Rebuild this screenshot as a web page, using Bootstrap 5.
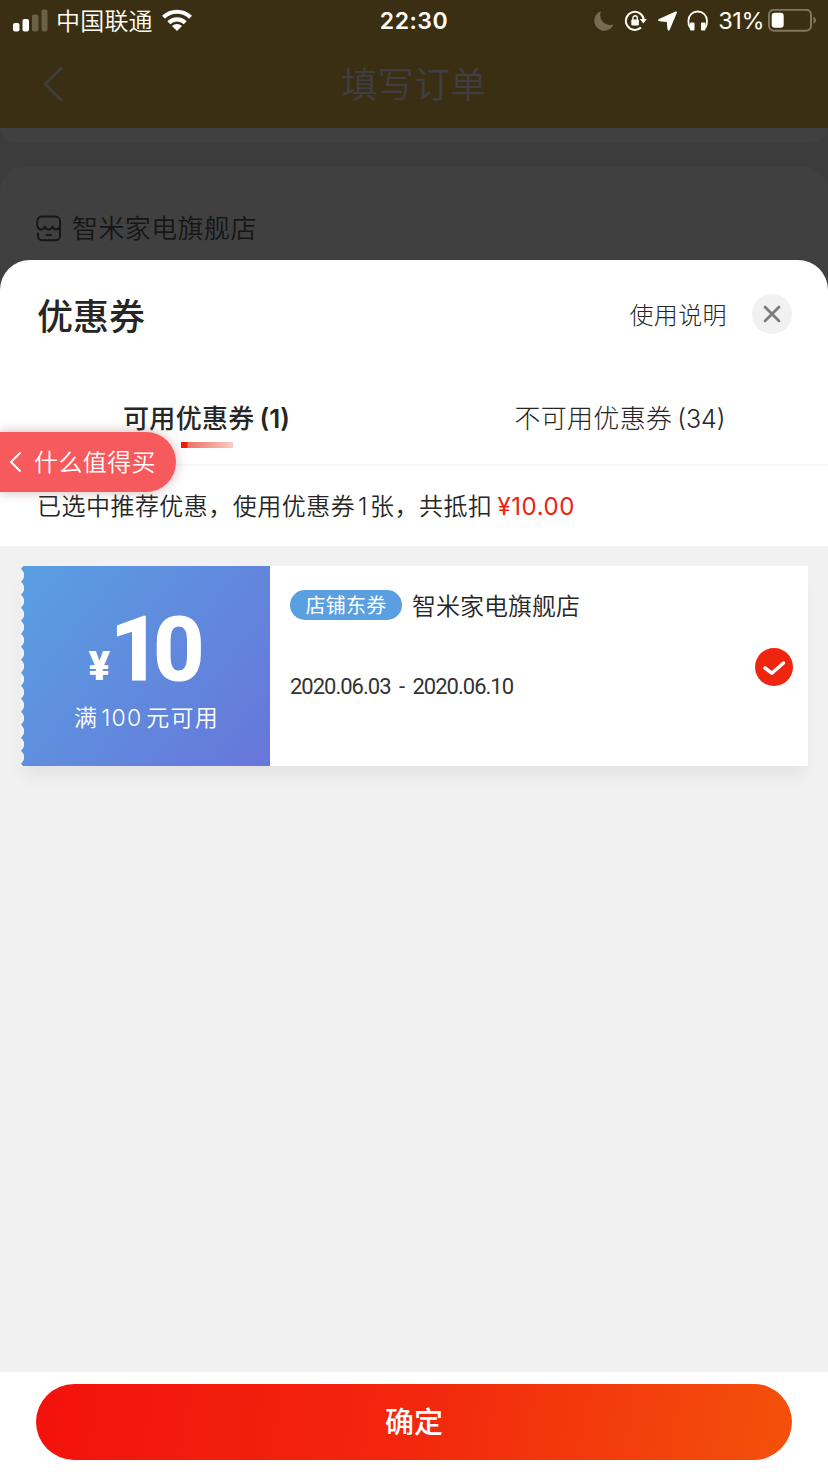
<!DOCTYPE html>
<html lang="zh-CN">
<head>
<meta charset="utf-8">
<meta name="viewport" content="width=device-width, initial-scale=1">
<title>优惠券</title>
<link href="https://cdn.jsdelivr.net/npm/bootstrap@5.3.0/dist/css/bootstrap.min.css" rel="stylesheet">
<style>
  body { font-family: Inter, "Noto Sans CJK SC", sans-serif; font-size: 24px; line-height: 1; color: #262626; background: #404040; }
  .screen { width: 828px; height: 1472px; }
  svg { display: block; flex: none; }
  .nowrap { white-space: nowrap; }

  .topbar { height: 128px; background: #3b2f13; color: #fffdf5; }
  .status { height: 42px; padding: 0 11px 0 13px; }
  .carrier { font-size: 24px; margin-left: 8px; padding-top: 2px; font-weight: 350; letter-spacing: .2px; }
  .clock { font-size: 23px; font-weight: 600; letter-spacing: .5px; }
  .percent { font-size: 23.5px; letter-spacing: -.5px; margin-left: 9px; }
  .gap-icons { gap: 9px; }
  .titlebar { height: 86px; padding: 0 42px 2px; color: #403e43; }
  .titlebar .caption { font-size: 36px; font-weight: 350; letter-spacing: .3px; }

  .behind { background: #3c3c3c; }
  .slip { height: 14px; background: #404040; border-radius: 0 0 24px 24px; }
  .shop { height: 128px; margin-top: 25px; margin-bottom: -35px; padding: 0 0 6px 36px; background: #404040; border-radius: 24px 24px 0 0; color: #161616; font-size: 26px; letter-spacing: .4px; font-weight: 350; }
  .shop span { margin-left: 10px; padding-top: 2px; }

  .sheet { position: relative; background: #fff; border-radius: 30px 30px 0 0; }
  .sheet-head { height: 110px; padding: 0 36px 2px 37px; }
  .sheet-title { font-size: 36px; font-weight: 500; padding-top: 7px; }
  .help { font-size: 24px; font-weight: 300; letter-spacing: .4px; margin-right: 25px; padding-top: 4px; }
  .close-btn { width: 40px; height: 40px; background: #f1f1f1; }

  .tabs { height: 96px; border-bottom: 2px solid #f6f6f6; font-size: 26px; letter-spacing: .3px; }
  .tab-on { font-weight: 500; padding-top: 36px; }
  .tab-on > span { margin-right: 1px; }
  .tab-off { font-weight: 300; padding-top: 36px; padding-right: 2px; }
  .count { margin-left: 5px; font-size: 25px; letter-spacing: 0; font-weight: 350; }
  .tab-on .count { font-weight: 600; font-size: 26px; }
  .tab-line { width: 52px; height: 6px; margin-top: 10px; background: linear-gradient(90deg, #ee1c05 0 12%, #f1705f 13%, #f8cbc6); }
  .note { height: 80px; padding: 2px 37px 0; font-size: 24px; font-weight: 350; letter-spacing: .47px; }
  .one { margin: 0 2px 0 3px; }
  .red { color: #ee2211; letter-spacing: .6px; margin-left: 5px; font-weight: 400; }

  .back-pill { position: absolute; left: 0; top: 172px; width: 176px; height: 60px; padding-left: 9px; background: #f75a5c; border-radius: 0 30px 30px 0; color: #fff; font-size: 24px; letter-spacing: .4px; font-weight: 350; box-shadow: 0 0 12px rgba(130, 70, 70, .4); }
  .back-pill span { margin-left: 11px; padding-top: 2px; }

  .list-area { background: #f1f1f1; padding: 20px 20px 0; }
  .coupon { height: 200px; background: #fff; box-shadow: 0 14px 16px -4px rgba(0, 0, 0, .06); }
  .face { position: relative; width: 250px; background: linear-gradient(128deg, #5a9fe1, #6776da); color: #fff; }
  .face::before { content: ""; position: absolute; left: 0; top: 0; width: 5px; height: 100%; background: radial-gradient(circle at -3.8px 50%, #f1f1f1 7.6px, transparent 8.2px) 0 2.7px / 5px 13px repeat-y; }
  .amount { font-family: Roboto, sans-serif; font-weight: 700; height: 64px; margin-top: 52px; padding-right: 5px; }
  .amount .yen { font-size: 40px; line-height: 30px; font-weight: 900; }
  .amount .num { font-size: 89px; line-height: 64px; letter-spacing: -8px; -webkit-text-stroke: 1.2px #fff; }
  .cond { font-size: 23px; font-weight: 350; letter-spacing: 1.2px; margin-top: 25px; padding-left: 3px; }
  .cond span { margin: 0 4px 0 3px; }
  .info { padding: 24px 15px 0 20px; }
  .tag { width: 112px; height: 30px; padding-top: 2px; background: #5a9fe0; color: #fff; font-size: 20px; font-weight: 400; letter-spacing: .3px; }
  .seller { font-size: 24px; font-weight: 350; margin-left: 10px; padding-top: 4px; }
  .dates { font-family: Roboto, sans-serif; font-size: 22px; letter-spacing: -1px; word-spacing: 4px; margin-top: 56px; color: #333; }
  .tick { margin-top: 58px; }

  .foot { height: 100px; padding: 12px 36px; background: #fff; }
  .ok { height: 76px; border: 0; border-radius: 38px; color: #fff; font-size: 29px; line-height: 1; font-weight: 500; background: linear-gradient(100deg, #f3120c, #f2270d 50%, #f4510b); }
</style>
</head>
<body>
<div class="screen d-flex flex-column overflow-hidden">
  <header class="topbar">
    <div class="status position-relative d-flex align-items-center justify-content-between">
      <div class="d-flex align-items-center">
        <svg width="35" height="24" viewBox="0 0 35 24"><g fill="#fff"><rect x="0" y="14" width="6.5" height="8.5" rx="2"/><rect x="9.5" y="10" width="6.5" height="12.5" rx="2"/></g><g fill="#6a6048"><rect x="19" y="5.500" width="6.500" height="17" rx="2"/><rect x="28.500" y="0.500" width="6" height="22" rx="2"/></g></svg>
        <span class="carrier nowrap">中国联通</span>
        <svg class="ms-2" width="32" height="24" viewBox="0 0 32 24"><g fill="none" stroke="#fff" stroke-width="4.200"><path d="M2.500 8.300a19.200 19.200 0 0 1 27 0"/><path d="M7.800 13.800a11.700 11.700 0 0 1 16.400 0"/></g><path fill="#fff" d="M16 22l-5-5a7 7 0 0 1 10 0z"/></svg>
      </div>
      <span class="clock position-absolute top-50 start-50 translate-middle">22:30</span>
      <div class="d-flex align-items-center">
        <div class="d-flex align-items-center gap-icons">
          <svg width="22" height="22" viewBox="0 0 22 22"><path fill="#766c55" d="M8 1.200A10 10 0 1 0 20.500 14.500 10 10 0 0 1 8 1.200z"/></svg>
          <svg width="24" height="22" viewBox="0 0 24 22"><path d="M17 17.500A9 9 0 1 1 19.800 9.700" fill="none" stroke="#fffdf5" stroke-width="2"/><path fill="#fffdf5" d="M15.800 9h7l-3.500 4.500z"/><rect x="7.300" y="9.500" width="7.600" height="6" rx="1" fill="#fffdf5"/><path d="M8.900 10.500V8a2.200 2.200 0 0 1 4.400 0v2.500" fill="none" stroke="#fffdf5" stroke-width="1.400"/></svg>
          <svg width="21" height="22" viewBox="0 0 21 22"><path fill="#fff" d="M18.500 1.500Q20.500 1 19.800 3L12.800 19.500q-1.600 2.500-2.300-.2L9.800 12 2.500 11.300Q-.3 10.500 2 9z"/></svg>
          <svg width="22" height="22" viewBox="0 0 22 22"><path d="M3.200 18C1.500 15.500 1.300 13 1.400 10.800a9.300 9.300 0 0 1 18.600 0c.1 2.200-.1 4.700-1.800 7.200" fill="none" stroke="#fffdf5" stroke-width="1.800"/><rect x="3" y="12.500" width="4.500" height="8" rx="1" fill="#fffdf5"/><rect x="14" y="12.500" width="4.500" height="8" rx="1" fill="#fffdf5"/></svg>
        </div>
        <span class="percent nowrap">31%</span>
        <svg class="ms-1" width="49" height="24" viewBox="0 0 49 24"><rect x="1" y="0.800" width="42" height="21" rx="5" fill="none" stroke="#80775f" stroke-width="2"/><rect x="3.700" y="3.700" width="12" height="15" rx="3" fill="#fff"/><path d="M45.500 7.500q5 3.700 0 7.500z" fill="#80775f"/></svg>
      </div>
    </div>
    <div class="titlebar position-relative d-flex align-items-center">
      <svg width="24" height="38" viewBox="0 0 24 38"><path d="M20 2.500L3 19l17 17" fill="none" stroke="#403e43" stroke-width="2.600"/></svg>
      <span class="caption nowrap position-absolute top-50 start-50 translate-middle">填写订单</span>
    </div>
  </header>

  <div class="behind">
    <div class="slip"></div>
    <div class="shop d-flex align-items-center">
      <svg width="26" height="27" viewBox="0 0 26 27"><g fill="none" stroke="#161616" stroke-width="1.900" stroke-linecap="round" stroke-linejoin="round"><path d="M24 13V6a4.500 4.500 0 0 0-4.500-4.500H6A4.500 4.500 0 0 0 1.300 6v5q1 3.500 4 3.500T9 11.500q1 3 3.700 3t3.700-3q1 3 3.600 3 3 0 4-3.500"/><path d="M2 18.500v2.300A4.500 4.500 0 0 0 6.500 25.300h13A4.500 4.500 0 0 0 24 20.800V13M10.500 20h4.500"/></g></svg>
      <span class="nowrap">智米家电旗舰店</span>
    </div>
  </div>

  <main class="sheet d-flex flex-column flex-grow-1">
    <div class="sheet-head d-flex align-items-center">
      <h1 class="sheet-title nowrap m-0">优惠券</h1>
      <a class="help nowrap ms-auto text-reset text-decoration-none">使用说明</a>
      <span class="close-btn rounded-circle d-flex align-items-center justify-content-center">
        <svg width="18" height="18" viewBox="0 0 18 18"><path d="M2 2l14 14M16 2L2 16" stroke="#7c7c7c" stroke-width="2.800" stroke-linecap="round"/></svg>
      </span>
    </div>

    <div class="tabs d-flex">
      <div class="tab-on w-50 d-flex flex-column align-items-center"><span class="nowrap">可用优惠券<span class="count">(1)</span></span><i class="tab-line"></i></div>
      <div class="tab-off w-50 d-flex flex-column align-items-center"><span class="nowrap">不可用优惠券<span class="count">(34)</span></span></div>
    </div>
    <div class="note d-flex align-items-center nowrap"><span>已选中推荐优惠，使用优惠券</span><span class="one">1</span><span>张，共抵扣</span><span class="red">¥10.00</span></div>

    <div class="list-area flex-grow-1">
      <section class="coupon d-flex">
        <div class="face d-flex flex-column align-items-center">
          <div class="amount d-flex align-items-end"><span class="yen">¥</span><span class="num">10</span></div>
          <div class="cond nowrap">满<span>100</span>元可用</div>
        </div>
        <div class="info d-flex flex-grow-1 justify-content-between">
          <div>
            <div class="d-flex align-items-center">
              <span class="tag rounded-pill d-flex align-items-center justify-content-center">店铺东券</span>
              <span class="seller nowrap">智米家电旗舰店</span>
            </div>
            <div class="dates nowrap">2020.06.03 - 2020.06.10</div>
          </div>
          <svg class="tick" width="38" height="38" viewBox="0 0 38 38"><circle cx="19" cy="19" r="19" fill="#f0250f"/><path d="M10 20l6.800 5.200L28.500 15" fill="none" stroke="#fff" stroke-width="3.500" stroke-linecap="round" stroke-linejoin="round"/></svg>
        </div>
      </section>
    </div>

    <div class="foot"><button class="ok btn w-100 d-flex align-items-center justify-content-center">确定</button></div>

    <a class="back-pill d-flex align-items-center nowrap text-decoration-none">
      <svg width="14" height="22" viewBox="0 0 14 22"><path d="M11.500 1.500L2 11l9.500 9.500" fill="none" stroke="#fff" stroke-width="2"/></svg>
      <span>什么值得买</span>
    </a>
  </main>
</div>
<script src="https://cdn.jsdelivr.net/npm/bootstrap@5.3.0/dist/js/bootstrap.bundle.min.js"></script>
</body>
</html>
